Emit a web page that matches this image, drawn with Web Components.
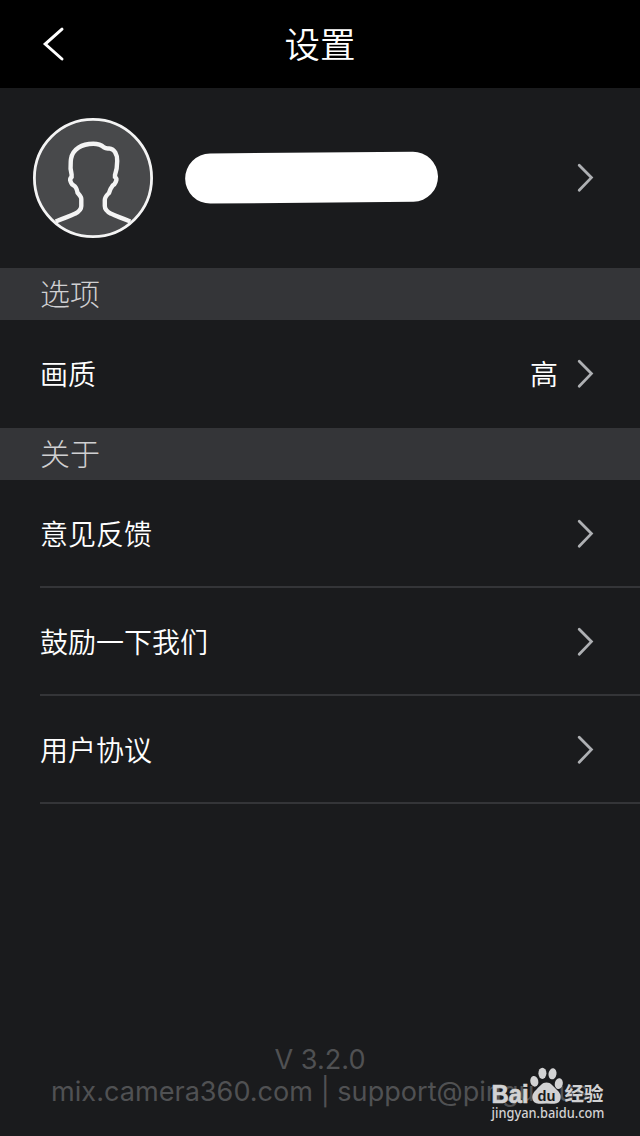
<!DOCTYPE html>
<html lang="zh-CN">
<head>
  <meta charset="utf-8">
  <title>设置</title>
  <style>
    body {
      margin: 0;
      background: #1a1b1d;
      color: #fff;
      font-family: "Noto Sans CJK SC", sans-serif;
    }
  </style>
</head>
<body>
  <settings-page>
    <nav-header slot="header">设置</nav-header>
    <profile-row></profile-row>
    <section-title>选项</section-title>
    <setting-row>画质<span slot="value">高</span></setting-row>
    <section-title>关于</section-title>
    <setting-row divider>意见反馈</setting-row>
    <setting-row divider>鼓励一下我们</setting-row>
    <setting-row divider>用户协议</setting-row>
    <page-footer slot="footer">
      <span slot="version">V 3.2.0</span>
      mix.camera360.com | support@pinguo.us
    </page-footer>
    <baidu-mark slot="mark"></baidu-mark>
  </settings-page>

  <script>
    class SettingsPage extends HTMLElement {
      constructor() {
        super();
        this.attachShadow({ mode: 'open' }).innerHTML = `
          <style>
            :host {
              position: relative;
              display: flex;
              flex-direction: column;
              width: 640px;
              height: 1136px;
              overflow: hidden;
            }

            main {
              flex: 1;
            }
          </style>
          <slot name="header"></slot>
          <main><slot></slot></main>
          <slot name="footer"></slot>
          <slot name="mark"></slot>
        `;
      }
    }

    class NavHeader extends HTMLElement {
      constructor() {
        super();
        this.attachShadow({ mode: 'open' }).innerHTML = `
          <style>
            :host {
              display: grid;
              grid-template-columns: 100px 1fr 100px;
              align-items: center;
              height: 88px;
              background: #000;
              font-family: "Noto Sans CJK SC DemiLight", "Noto Sans CJK SC", sans-serif;
              font-size: 35.5px;
              font-weight: 350;
              line-height: 86px;
              text-align: center;
            }

            svg {
              display: block;
              margin-left: 40px;
            }

            span {
              height: 88px;
            }
          </style>
          <svg width="28" height="40" viewBox="0 0 28 40" fill="none" stroke="#fff" stroke-width="3" stroke-linecap="round">
            <path d="M22 5.2L5.2 20L22 35" />
          </svg>
          <span><slot></slot></span>
        `;
      }
    }

    class ChevronIcon extends HTMLElement {
      constructor() {
        super();
        this.attachShadow({ mode: 'open' }).innerHTML = `
          <style>
            :host {
              display: block;
              width: 20px;
              height: 32px;
            }

            svg {
              display: block;
            }
          </style>
          <svg width="20" height="32" viewBox="0 0 20 32" fill="none" stroke="#aeb0b3" stroke-width="2.8" stroke-linecap="round">
            <path d="M4.2 3.2L16.4 15.6L4.2 28.2" />
          </svg>
        `;
      }
    }

    class ProfileRow extends HTMLElement {
      constructor() {
        super();
        this.attachShadow({ mode: 'open' }).innerHTML = `
          <style>
            :host {
              display: flex;
              align-items: center;
              height: 180px;
              padding: 0 45px 0 32px;
              box-sizing: border-box;
            }

            svg {
              display: block;
            }

            .name {
              margin-left: 30px;
            }

            chevron-icon {
              margin-left: auto;
            }
          </style>
          <svg width="122" height="122" viewBox="-1 -1 122 122" fill="none" stroke="#f4f4f4">
            <circle cx="60" cy="60" r="58.6" fill="#48494b" stroke-width="2.8" />
            <path stroke-width="4.4" d="M22.7 103.6C32 99.5 37 98.5 42 95.7Q48.3 92.5 48.3 88V81Q48.3 79 44.6 74.8Q43.5 69 40.6 67.4C38.4 66.5 38.6 65.5 37.6 63.5Q36.4 61 38.6 59V56.5C36.6 50 37.6 46 38 41C39.5 31 49 25.8 60.3 25.8C66 25.8 69 27.6 71 29.4Q73 30.8 76 30.4C82 31 84.2 37 84.2 43C84.2 49 83.5 53 82 57V59Q84.3 60.5 82.9 63.5C82 65.5 82 66.5 79.6 67.6Q77.6 70 76 75Q71.8 79 71.8 82V88Q71.8 92.5 78 95.7C83 98.5 88 99.5 97.3 103.6" />
          </svg>
          <svg class="name" width="256" height="54" viewBox="0 0 256 54">
            <path fill="#fff" d="M26 2.4L228.500 .8A25 25 0 0 1 229.500 50.8L26.500 52.6A25.1 25.1 0 0 1 26 2.4Z" />
          </svg>
          <chevron-icon></chevron-icon>
        `;
      }
    }

    class SectionTitle extends HTMLElement {
      constructor() {
        super();
        this.attachShadow({ mode: 'open' }).innerHTML = `
          <style>
            :host {
              display: block;
              height: 52px;
              padding-left: 40px;
              background: #343538;
              color: #d0d0d2;
              font-size: 30px;
              font-weight: 300;
              line-height: 49px;
            }
          </style>
          <slot></slot>
        `;
      }
    }

    class SettingRow extends HTMLElement {
      constructor() {
        super();
        this.attachShadow({ mode: 'open' }).innerHTML = `
          <style>
            :host {
              display: flex;
              height: 108px;
              margin-left: 40px;
              padding-right: 45px;
              box-sizing: border-box;
              font-family: "Noto Sans CJK SC DemiLight", "Noto Sans CJK SC", sans-serif;
              font-size: 28px;
              font-weight: 350;
              line-height: 107px;
            }

            :host([divider]) {
              border-bottom: 2px solid #343538;
            }

            .value {
              margin-left: auto;
            }

            chevron-icon {
              margin: 38px 0 0 17px;
            }
          </style>
          <slot></slot>
          <span class="value"><slot name="value"></slot></span>
          <chevron-icon></chevron-icon>
        `;
      }
    }

    class PageFooter extends HTMLElement {
      constructor() {
        super();
        this.attachShadow({ mode: 'open' }).innerHTML = `
          <style>
            :host {
              display: block;
              padding-bottom: 28px;
              color: #505153;
              font-family: Inter, sans-serif;
              font-size: 27.1px;
              line-height: 32px;
              text-align: center;
              white-space: nowrap;
            }
          </style>
          <div><slot name="version"></slot></div>
          <div><slot></slot></div>
        `;
      }
    }

    class BaiduMark extends HTMLElement {
      constructor() {
        super();
        this.attachShadow({ mode: 'open' }).innerHTML = `
          <style>
            /* floats over the footer line */
            :host {
              position: absolute;
              left: 488px;
              top: 1064px;
            }

            svg {
              display: block;
            }
          </style>
          <svg width="128" height="68" viewBox="488 1064 128 68" fill="#d2d2d3">
            <text x="491.5" y="1102.5" font-family="Liberation Sans, sans-serif" font-weight="700" font-size="25" textLength="37" lengthAdjust="spacingAndGlyphs" stroke="#d2d2d3" stroke-width=".7">Bai</text>
            <ellipse cx="534.3" cy="1081.3" rx="4" ry="5.4" transform="rotate(-12 534.3 1081.3)" />
            <ellipse cx="542.4" cy="1073.3" rx="4" ry="5.6" />
            <ellipse cx="552.5" cy="1073.8" rx="4" ry="5.6" transform="rotate(10 552.5 1073.8)" />
            <ellipse cx="558.8" cy="1083.6" rx="4" ry="5.4" transform="rotate(12 558.8 1083.6)" />
            <path d="M546.5 1082.5C551 1082.5 553 1086 556 1089C559.5 1092 561.5 1095 560.5 1099C559.5 1103.5 555 1104.2 551 1103.7Q546.5 1103.2 542 1103.7C538 1104.2 533.5 1103.5 532.5 1099C531.7 1095 533.5 1092 537 1089C540 1086 542 1082.5 546.5 1082.5Z" />
            <text x="537.5" y="1100.5" fill="#1a1b1d" font-family="Liberation Sans, sans-serif" font-weight="700" font-size="15.5" textLength="18" lengthAdjust="spacingAndGlyphs">du</text>
            <text x="564.5" y="1101.3" font-family="Noto Sans CJK SC, sans-serif" font-weight="700" font-size="19.8" textLength="39" lengthAdjust="spacingAndGlyphs">经验</text>
            <text x="491.5" y="1118" font-family="Noto Sans, sans-serif" font-weight="500" font-size="13.5" textLength="113" lengthAdjust="spacingAndGlyphs">jingyan.baidu.com</text>
          </svg>
        `;
      }
    }

    customElements.define('settings-page', SettingsPage);
    customElements.define('nav-header', NavHeader);
    customElements.define('chevron-icon', ChevronIcon);
    customElements.define('profile-row', ProfileRow);
    customElements.define('section-title', SectionTitle);
    customElements.define('setting-row', SettingRow);
    customElements.define('page-footer', PageFooter);
    customElements.define('baidu-mark', BaiduMark);
  </script>
</body>
</html>
